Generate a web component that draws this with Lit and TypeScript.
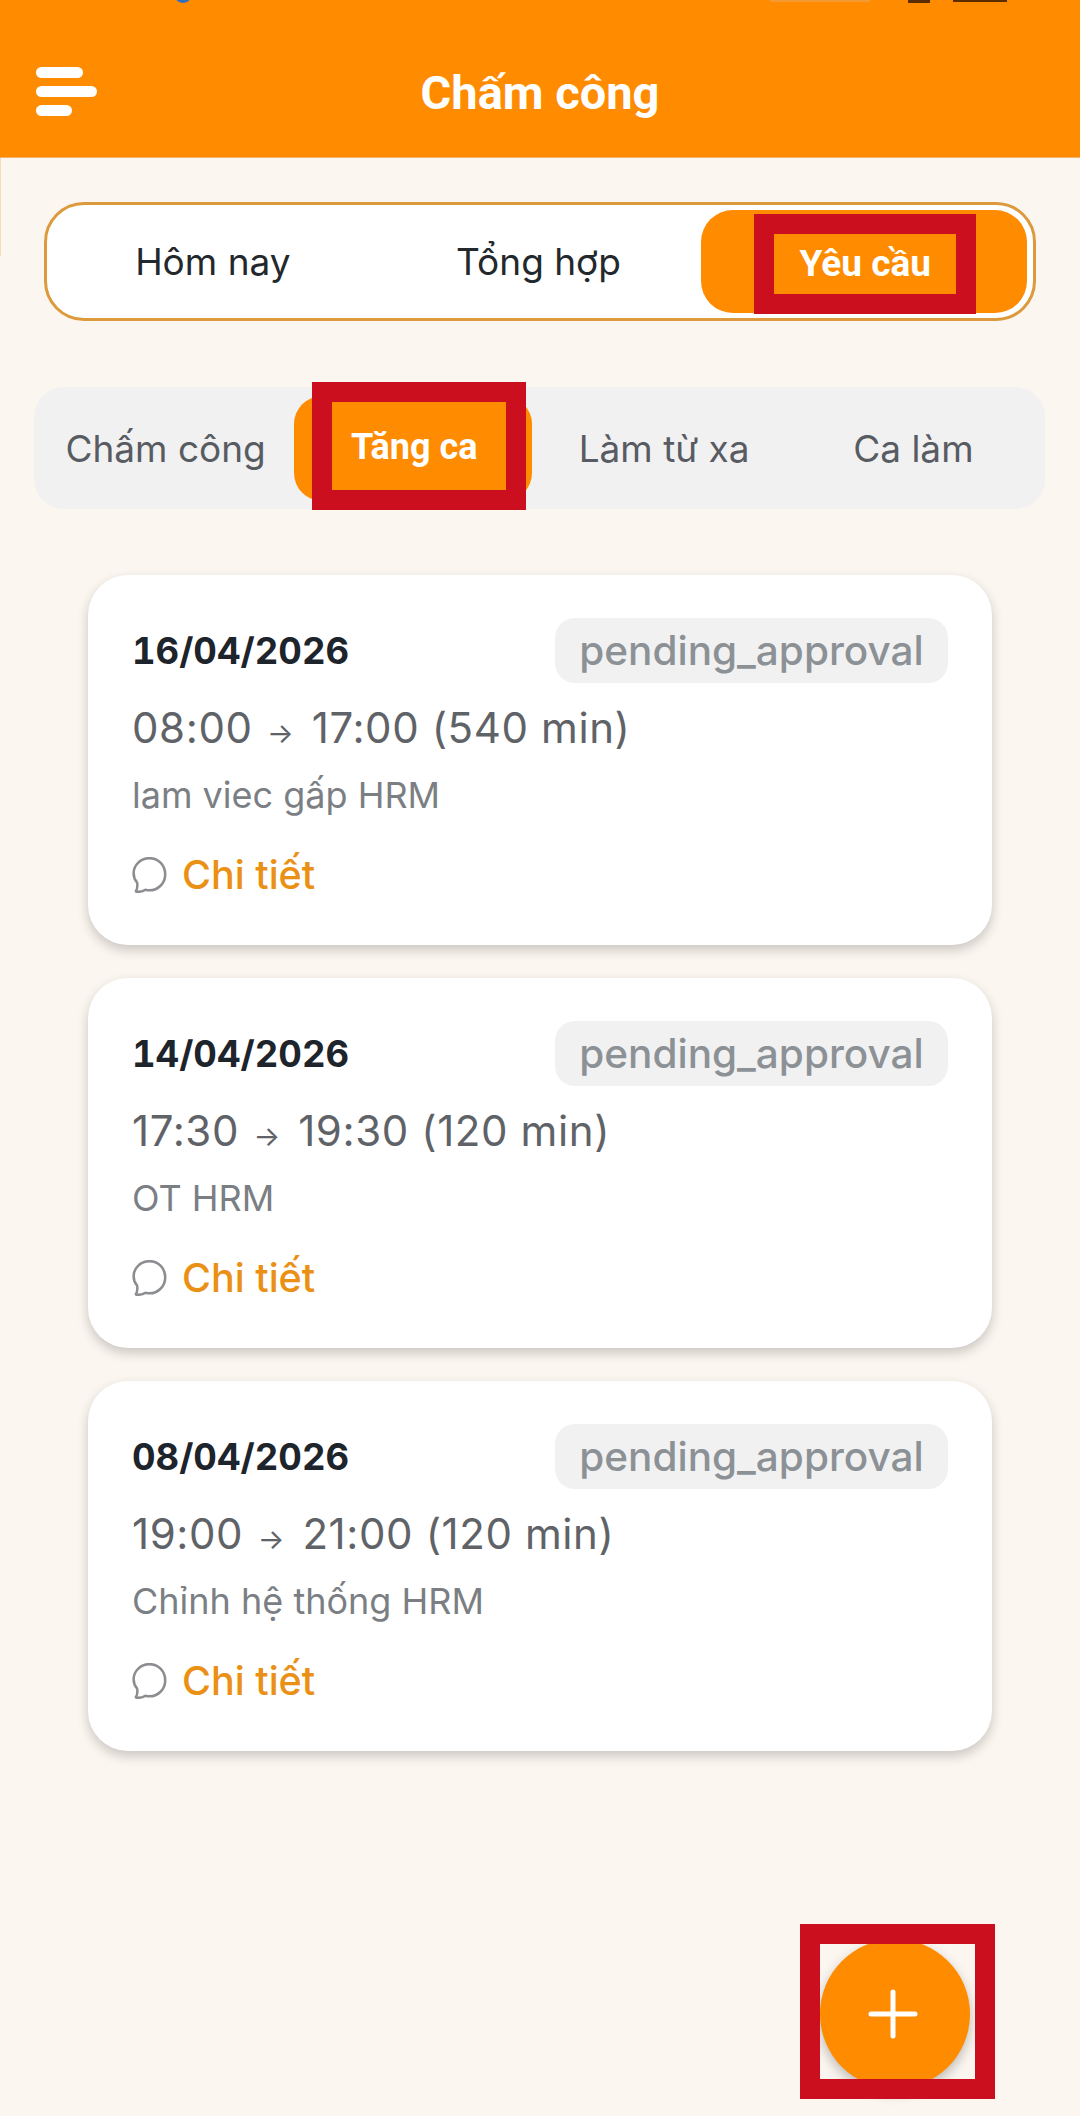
import { LitElement, html, css, svg } from "lit";
import { customElement } from "lit/decorators.js";

const items = [
  { date: "16/04/2026", from: "08:00", to: "17:00", mins: "(540 min)", note: "lam viec gấp HRM" },
  { date: "14/04/2026", from: "17:30", to: "19:30", mins: "(120 min)", note: "OT HRM" },
  { date: "08/04/2026", from: "19:00", to: "21:00", mins: "(120 min)", note: "Chỉnh hệ thống HRM" },
];

const bubble = svg`<path d="M17 3C9.6 3 3.4 8.8 3.4 16c0 3.1 1 5.7 2.9 7.9.5.6.4 5.900-.7 6.900-.6.6 0 1.200.8 1.200 3 0 5.300-.6 7.200-1.800 1.100.3 2.200.5 3.400.5 7.400 0 13.600-6 13.600-13.700C30.600 8.800 24.400 3 17 3Z" fill="none" stroke="#8b8d90" stroke-width="2.200" stroke-linejoin="round"/>`;

@customElement("app-root")
export class AppRoot extends LitElement {
  static styles = css`
    :host { display: block; }
    .page {
      position: relative; width: 1080px; height: 2116px; overflow: hidden;
      background: #fcf6f0; font-family: Inter, "Noto Sans", sans-serif;
    }
    .edge { position: absolute; left: 0; top: 158px; width: 1px; height: 98px; background: #f6dcb8; }
    .header {
      position: relative; height: 158px; background: #ff8c00;
      display: flex; align-items: center; justify-content: center;
      border-bottom: 1px solid #f3b46a; box-sizing: border-box;
    }
    .status { position: absolute; inset: 0 0 auto 0; height: 4px; overflow: hidden; }
    .flag { position: absolute; left: 176px; top: -7px; width: 14px; height: 10px; border-radius: 50%; background: #2f6fc0; }
    .clock { position: absolute; left: 770px; top: 0; width: 100px; height: 2px; background: #f49a30; }
    .wifi { position: absolute; left: 908px; top: 0; width: 22px; height: 3px; background: #5a2c00; }
    .batt { position: absolute; left: 953px; top: 0; width: 54px; height: 2px; background: #5a2c00; }
    .menu { position: absolute; left: 36px; top: 67px; display: flex; flex-direction: column; gap: 8px; }
    .menu i { display: block; height: 11px; border-radius: 6px; background: #fff; }
    .menu i:nth-child(1) { width: 47px; }
    .menu i:nth-child(2) { width: 61px; }
    .menu i:nth-child(3) { width: 36px; }
    .title { font: 700 47px/1 Roboto, sans-serif; color: #fff; transform: translateY(14px); }

    .tabs {
      margin: 44px 44px 0; height: 119px; box-sizing: border-box; padding: 5px 6px 5px 3px;
      border: 3px solid #dd9a3c; border-radius: 40px; background: #fff;
      display: grid; grid-template-columns: repeat(3, 1fr);
    }
    .tab {
      position: relative; display: flex; align-items: center; justify-content: center;
      font-size: 37px; color: #23282c; border-radius: 32px;
    }
    .tab.on { background: #ff8c00; }
    .frame {
      position: absolute; box-sizing: border-box; border: 20px solid #cc0f1e;
      display: flex; align-items: center; justify-content: center;
      color: #fff; font: 700 37px/1 Roboto, sans-serif; background: #ff8c00;
    }
    .tab .frame { left: 53px; top: 4px; width: 222px; height: 100px; padding-bottom: 2px; }

    .subs {
      margin: 66px 35px 0 34px; height: 122px; box-sizing: border-box; padding: 9px 7px 8px;
      background: #f1f1f2; border-radius: 30px;
      display: grid; grid-template-columns: repeat(4, 1fr);
    }
    .sub {
      position: relative; display: flex; align-items: center; justify-content: center;
      font-size: 37px; color: #585c62; border-radius: 28px;
    }
    .sub.on { background: #ff8c00; margin: 0 8px 0 4px; }
    .sub .frame { left: 18px; top: -14px; width: 214px; height: 128px; padding: 2px 10px 0 0; font-size: 36px; }

    .list { margin: 66px 88px 0; display: flex; flex-direction: column; gap: 33px; }
    .card {
      height: 370px; box-sizing: border-box; padding: 43px 44px 0; background: #fff;
      border-radius: 40px; box-shadow: 0 5px 12px rgba(0, 0, 0, 0.2);
    }
    .top { display: flex; align-items: center; justify-content: space-between; height: 65px; }
    .date { font-size: 36.500px; font-weight: 700; color: #1d242b; font-variant-numeric: tabular-nums; }
    .badge {
      height: 65px; width: 393px; box-sizing: border-box; display: flex; align-items: center; justify-content: center;
      background: #f1f1f2; border-radius: 20px; color: #8c9196; font-size: 40.500px; font-weight: 500; white-space: nowrap;
    }
    .time { margin-top: 22px; font-size: 42px; line-height: 46px; color: #5f6368; letter-spacing: 0.6px; white-space: nowrap; }
    .arrow { font-size: 28px; margin: 0 5px 0 2px; }
    .note { margin-top: 19px; font-size: 36px; line-height: 40px; color: #7b7f84; }
    .link { margin-top: 38px; height: 44px; display: flex; align-items: center; gap: 14px; color: #ea9014; font-size: 39.500px; font-weight: 500; }
    .link svg { width: 36px; height: 36px; display: block; }

    .fab-frame {
      position: absolute; left: 800px; top: 1924px; width: 195px; height: 175px; box-sizing: border-box;
      border: 20px solid #cc0f1e;
    }
    .fab {
      position: absolute; left: 820px; top: 1939px; width: 150px; height: 150px; border-radius: 50%;
      background: #ff8c00; box-shadow: 0 5px 12px rgba(0, 0, 0, 0.25);
      display: flex; align-items: center; justify-content: center;
    }
    .fab svg { width: 50px; height: 50px; display: block; margin-right: 4px; }
  `;

  render() {
    return html`<div class="page">
      <div class="edge"></div>
      <div class="header">
        <div class="status"><i class="flag"></i><i class="clock"></i><i class="wifi"></i><i class="batt"></i></div>
        <div class="menu"><i></i><i></i><i></i></div>
        <div class="title">Chấm công</div>
      </div>
      <div class="tabs">
        <div class="tab">Hôm nay</div>
        <div class="tab">Tổng hợp</div>
        <div class="tab on"><div class="frame">Yêu cầu</div></div>
      </div>
      <div class="subs">
        <div class="sub">Chấm công</div>
        <div class="sub on"><div class="frame">Tăng ca</div></div>
        <div class="sub">Làm từ xa</div>
        <div class="sub">Ca làm</div>
      </div>
      <div class="list">
        ${items.map(
          (it) => html`<div class="card">
            <div class="top"><div class="date">${it.date}</div><div class="badge">pending_approval</div></div>
            <div class="time">${it.from} <span class="arrow">→</span> ${it.to} ${it.mins}</div>
            <div class="note">${it.note}</div>
            <div class="link"><svg viewBox="2 2 31 31">${bubble}</svg>Chi tiết</div>
          </div>`
        )}
      </div>
      <div class="fab">
        <svg viewBox="0 0 50 50"><path d="M25 3v44M3 25h44" stroke="#fff" stroke-width="5" stroke-linecap="round"/></svg>
      </div>
      <div class="fab-frame"></div>
    </div>`;
  }
}
